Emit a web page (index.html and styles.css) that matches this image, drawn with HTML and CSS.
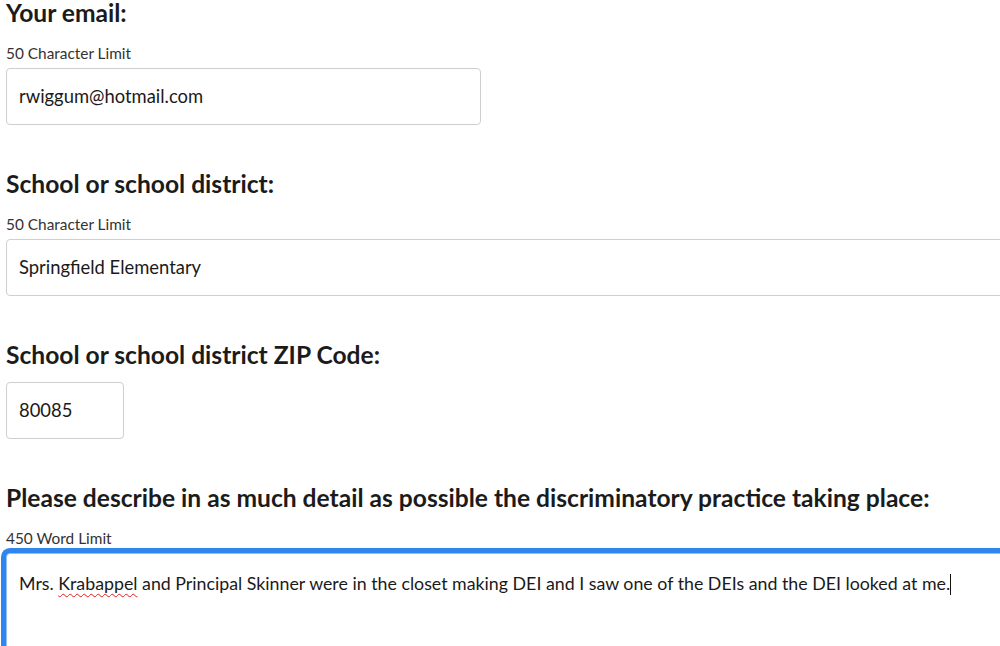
FILE: index.html
```html
<!DOCTYPE html>
<html lang="en">
<head>
<meta charset="utf-8">
<title>Report form</title>
<link rel="stylesheet" href="styles.css">
</head>
<body>
<form class="form">
  <div class="field">
    <h2 class="label">Your email:</h2>
    <div class="hint">50 Character Limit</div>
    <div class="input input-email">rwiggum@hotmail.com</div>
  </div>
  <div class="field">
    <h2 class="label">School or school district:</h2>
    <div class="hint">50 Character Limit</div>
    <div class="input input-school">Springfield Elementary</div>
  </div>
  <div class="field">
    <h2 class="label">School or school district ZIP Code:</h2>
    <div class="input input-zip">80085</div>
  </div>
  <div class="field">
    <h2 class="label">Please describe in as much detail as possible the discriminatory practice taking place:</h2>
    <div class="hint">450 Word Limit</div>
    <div class="input textarea">Mrs. <span class="misspelled">Krabappel</span> and Principal Skinner were in the closet making DEI and I saw one of the DEIs and the DEI looked at me.<span class="caret"></span></div>
  </div>
</form>
</body>
</html>
```

FILE: styles.css
```css
html, body {
  margin: 0;
  padding: 0;
  background: #ffffff;
  overflow: hidden;
}

body {
  font-family: "Lato", "Open Sans", sans-serif;
  color: #1c1c1c;
  width: 1000px;
  height: 646px;
}

.form {
  display: flex;
  flex-direction: column;
  gap: 44px;
  padding: 0 0 0 6px;
  margin-top: -2px;
}

.field {
  display: flex;
  flex-direction: column;
}

.label {
  margin: 0 0 12px 0;
  font-size: 24.6px;
  line-height: 30px;
  font-weight: 700;
  color: #1b1b1b;
  white-space: nowrap;
}

.hint {
  font-size: 15.4px;
  line-height: 20px;
  color: #333333;
  margin-top: 3px;
  margin-bottom: 5px;
}

.input {
  box-sizing: border-box;
  height: 57px;
  border: 1px solid #cfcfcf;
  border-radius: 4px;
  padding: 0 12px;
  font-size: 18.4px;
  line-height: 55px;
  color: #1a1a1a;
  background: #ffffff;
  white-space: nowrap;
}

.input-email { width: 475px; }
.input-school { width: 1100px; }
.input-zip { width: 118px; }

.textarea {
  width: 1100px;
  height: 200px;
  font-size: 17.8px;
  border: 1px solid #8fc0f7;
  border-radius: 4px;
  box-shadow: 0 0 0 5px #2f86ef;
  line-height: 26px;
  padding-top: 16px;
}

.misspelled {
  text-decoration: underline wavy #e0201c;
  text-decoration-thickness: 1px;
  text-underline-offset: 3px;
}

.caret {
  display: inline-block;
  width: 1px;
  height: 21px;
  background: #111;
  vertical-align: -5px;
}
```
